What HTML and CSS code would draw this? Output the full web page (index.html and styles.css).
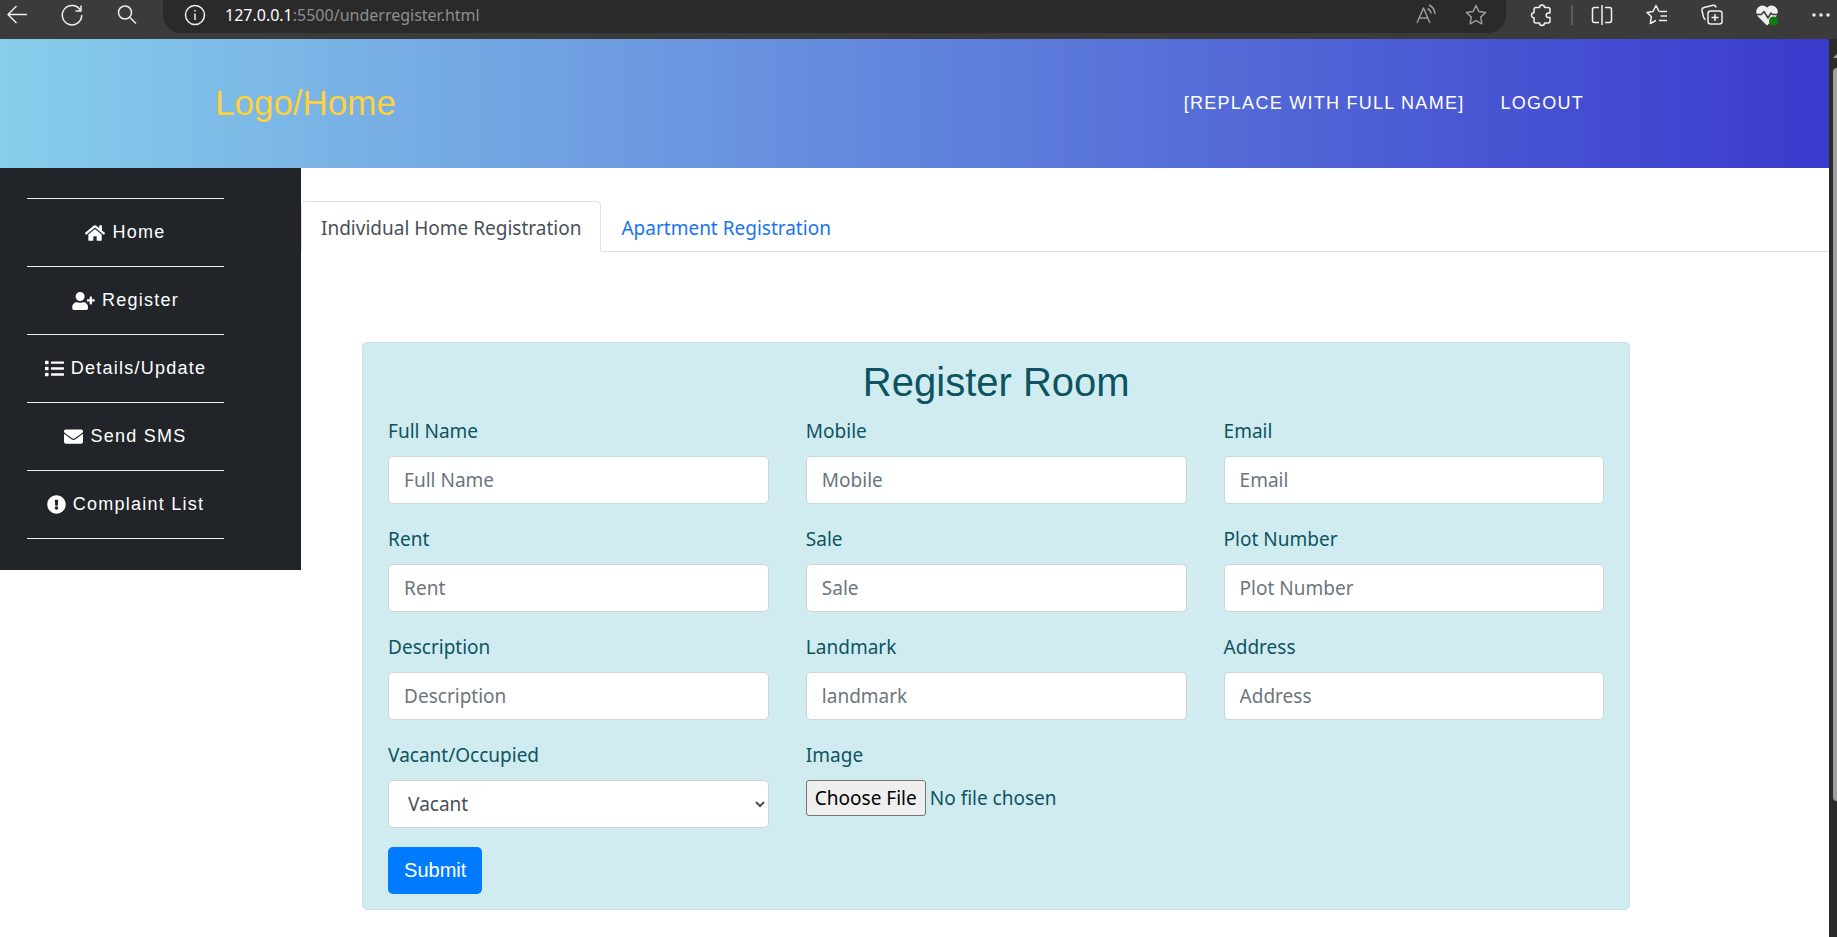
FILE: index.html
```html
<!DOCTYPE html>
<html lang="en">
<head>
<meta charset="utf-8">
<title>Register Room</title>
<link rel="stylesheet" href="styles.css">
</head>
<body>
<div class="toolbar">
  <div class="toolbar-nav">
    <button class="tool" aria-label="Back"><svg class="glyph" viewBox="0 0 24 24"><path d="M22 11.500H3M11.500 3L3 11.500l8.500 8.500"/></svg></button>
    <button class="tool" aria-label="Refresh"><svg class="glyph" viewBox="0 0 24 24"><path d="M20.500 7.500A9.700 9.700 0 1 0 21.700 12M21 2.500v5.500h-5.500"/></svg></button>
    <button class="tool" aria-label="Search"><svg class="glyph" viewBox="0 0 24 24"><circle cx="10" cy="9.500" r="6.500"/><path d="M15 14.500l6 6"/></svg></button>
  </div>
  <div class="address">
    <button class="tool" aria-label="Site information"><svg class="glyph" viewBox="0 0 24 24"><circle cx="12" cy="12" r="9.500"/><path d="M12 10.500v6.500M12 7v1.500"/></svg></button>
    <div class="url"><span class="url-host">127.0.0.1</span>:5500/underregister.html</div>
    <button class="tool muted" aria-label="Read aloud"><svg class="glyph" viewBox="0 0 24 24"><path d="M3 20L9.500 5 16 20M5.300 15h8.400M13.500 5.500q3 1.500 3.500 5M15 2q5.500 2.500 6 9"/></svg></button>
    <button class="tool muted" aria-label="Add favourite"><svg class="glyph" viewBox="0 0 24 24"><path d="M12 2.500l2.900 6.100 6.700.9-4.900 4.600 1.200 6.700-5.900-3.200-5.900 3.200 1.200-6.700L2.400 9.500l6.700-.9z"/></svg></button>
  </div>
  <div class="toolbar-end">
    <button class="tool" aria-label="Extensions"><svg class="glyph" viewBox="0 0 24 24"><path d="M6 4.500h3.500a2.500 2.500 0 0 1 5 0H18q2 0 2 2V10h-1.500a2.300 2.300 0 0 0 0 4.600H20v3.400q0 2-2 2h-3.500a2.500 2.500 0 0 1-5 0H6q-2 0-2-2v-3.300a2.500 2.500 0 0 1 0-5V6.500q0-2 2-2z"/></svg></button>
    <span class="divider"></span>
    <button class="tool" aria-label="Split screen"><svg class="glyph" viewBox="0 0 24 24"><path d="M12 2v20M9 4.500H4.500q-2 0-2 2v11q0 2 2 2H9M15 4.500h4.500q2 0 2 2v11q0 2-2 2H15"/></svg></button>
    <button class="tool" aria-label="Favourites"><svg class="glyph" viewBox="0 0 24 24"><path d="M14.500 8.500h7.500M15.500 13h6.500M14 17.500h8M14 8.500l-3-6-3 6-6 .9 4.400 4.300-1.100 6.800 5.700-3"/></svg></button>
    <button class="tool" aria-label="Collections"><svg class="glyph" viewBox="0 0 24 24"><rect x="8" y="8" width="14" height="13" rx="2.500"/><path d="M15 11v7M11.500 14.500h7M5.500 16.500Q4 16 3.500 14L2 7.500Q1.600 5 4 4.500l9-2.300q2.500-.4 3.200 2.300"/></svg></button>
    <button class="tool" aria-label="Browser essentials"><svg class="glyph" viewBox="0 0 24 24"><path class="solid" d="M12 21.500L3.500 13Q.500 8.500 3.500 5q4-3.500 8.500.5Q16.500 1.500 20.500 5q3 3.500 0 8z"/><path class="pulse" d="M1 11.500h5.500l2.500-3 4 6.500 3-5 1.500 1.500H23"/><circle class="status" cx="18.500" cy="18" r="4.500"/></svg></button>
    <button class="tool" aria-label="More"><svg class="glyph" viewBox="0 0 24 24"><circle class="solid" cx="4" cy="12" r="1"/><circle class="solid" cx="11" cy="12" r="1"/><circle class="solid" cx="18" cy="12" r="1"/></svg></button>
  </div>
</div>

<div class="viewport">
  <div class="page">
    <header class="header">
      <a class="logo" href="#">Logo/Home</a>
      <nav class="header-nav">
        <a href="#">[REPLACE WITH FULL NAME]</a>
        <a href="#">LOGOUT</a>
      </nav>
    </header>

    <div class="layout">
      <nav class="sidebar">
        <ul class="menu">
          <li><a href="#"><svg class="icon w20" viewBox="0 0 576 512"><path d="M280.370 148.260L96 300.110V464a16 16 0 0 0 16 16l112.060-.29a16 16 0 0 0 15.920-16V368a16 16 0 0 1 16-16h64a16 16 0 0 1 16 16v95.640a16 16 0 0 0 16 16.050L464 480a16 16 0 0 0 16-16V300L295.670 148.260a12.190 12.190 0 0 0-15.300 0zM571.600 251.470L488 182.560V44.050a12 12 0 0 0-12-12h-56a12 12 0 0 0-12 12v72.610L318.470 43a48 48 0 0 0-61 0L4.340 251.470a12 12 0 0 0-1.600 16.900l25.500 31A12 12 0 0 0 45.150 301l235.220-193.740a12.190 12.190 0 0 1 15.300 0L530.900 301a12 12 0 0 0 16.900-1.600l25.500-31a12 12 0 0 0-1.700-16.930z"/></svg>Home</a></li>
          <li><a href="#"><svg class="icon w23" viewBox="0 0 640 512"><path d="M624 208h-64v-64c0-8.800-7.200-16-16-16h-32c-8.800 0-16 7.200-16 16v64h-64c-8.800 0-16 7.200-16 16v32c0 8.800 7.200 16 16 16h64v64c0 8.800 7.200 16 16 16h32c8.800 0 16-7.200 16-16v-64h64c8.800 0 16-7.200 16-16v-32c0-8.800-7.200-16-16-16zm-400 48c70.700 0 128-57.300 128-128S294.700 0 224 0 96 57.300 96 128s57.300 128 128 128zm89.600 32h-16.700c-22.200 10.200-46.900 16-72.900 16s-50.600-5.800-72.900-16h-16.700C60.200 288 0 348.200 0 422.400V464c0 26.500 21.500 48 48 48h352c26.500 0 48-21.500 48-48v-41.600c0-74.200-60.200-134.400-134.400-134.400z"/></svg>Register</a></li>
          <li><a href="#"><svg class="icon w19" viewBox="0 0 512 512"><path d="M80 368H16a16 16 0 0 0-16 16v64a16 16 0 0 0 16 16h64a16 16 0 0 0 16-16v-64a16 16 0 0 0-16-16zm0-320H16A16 16 0 0 0 0 64v64a16 16 0 0 0 16 16h64a16 16 0 0 0 16-16V64a16 16 0 0 0-16-16zm0 160H16a16 16 0 0 0-16 16v64a16 16 0 0 0 16 16h64a16 16 0 0 0 16-16v-64a16 16 0 0 0-16-16zm416 176H176a16 16 0 0 0-16 16v32a16 16 0 0 0 16 16h320a16 16 0 0 0 16-16v-32a16 16 0 0 0-16-16zm0-320H176a16 16 0 0 0-16 16v32a16 16 0 0 0 16 16h320a16 16 0 0 0 16-16V80a16 16 0 0 0-16-16zm0 160H176a16 16 0 0 0-16 16v32a16 16 0 0 0 16 16h320a16 16 0 0 0 16-16v-32a16 16 0 0 0-16-16z"/></svg>Details/Update</a></li>
          <li><a href="#"><svg class="icon w19" viewBox="0 0 512 512"><path d="M502.300 190.800c3.900-3.100 9.700-.2 9.700 4.700V400c0 26.500-21.500 48-48 48H48c-26.500 0-48-21.500-48-48V195.600c0-5 5.700-7.800 9.700-4.700 22.400 17.400 52.100 39.500 154.100 113.600 21.100 15.400 56.700 47.800 92.200 47.600 35.700.3 72-32.800 92.300-47.600 102-74.100 131.600-96.300 154-113.700zM256 320c23.200.4 56.600-29.200 73.400-41.400 132.700-96.300 142.800-104.700 173.400-128.700 5.800-4.500 9.200-11.500 9.200-18.900v-19c0-26.500-21.500-48-48-48H48c-26.500 0-48 21.500-48 48v19c0 7.400 3.400 14.300 9.200 18.900 30.600 23.900 40.700 32.400 173.400 128.700 16.800 12.200 50.200 41.800 73.400 41.400z"/></svg>Send SMS</a></li>
          <li><a href="#"><svg class="icon w19" viewBox="0 0 512 512"><path d="M504 256c0 136.997-111.043 248-248 248S8 392.997 8 256C8 119.083 119.043 8 256 8s248 111.083 248 248zm-248 50c-25.405 0-46 20.595-46 46s20.595 46 46 46 46-20.595 46-46-20.595-46-46-46zm-43.673-165.346l7.418 136c.347 6.364 5.609 11.346 11.982 11.346h48.546c6.373 0 11.635-4.982 11.982-11.346l7.418-136c.375-6.874-5.098-12.654-11.982-12.654h-63.383c-6.884 0-12.356 5.780-11.981 12.654z"/></svg>Complaint List</a></li>
        </ul>
      </nav>

      <main class="main">
        <div class="tabs">
          <a class="tab active" href="#">Individual Home Registration</a>
          <a class="tab" href="#">Apartment Registration</a>
        </div>

        <form class="card">
          <h2 class="title">Register Room</h2>
          <div class="fields">
            <div class="field"><label for="name">Full Name</label><input class="control" id="name" type="text" placeholder="Full Name"></div>
            <div class="field"><label for="mobile">Mobile</label><input class="control" id="mobile" type="text" placeholder="Mobile"></div>
            <div class="field"><label for="email">Email</label><input class="control" id="email" type="email" placeholder="Email"></div>
            <div class="field"><label for="rent">Rent</label><input class="control" id="rent" type="text" placeholder="Rent"></div>
            <div class="field"><label for="sale">Sale</label><input class="control" id="sale" type="text" placeholder="Sale"></div>
            <div class="field"><label for="plot">Plot Number</label><input class="control" id="plot" type="text" placeholder="Plot Number"></div>
            <div class="field"><label for="description">Description</label><input class="control" id="description" type="text" placeholder="Description"></div>
            <div class="field"><label for="landmark">Landmark</label><input class="control" id="landmark" type="text" placeholder="landmark"></div>
            <div class="field"><label for="address">Address</label><input class="control" id="address" type="text" placeholder="Address"></div>
            <div class="field"><label for="status">Vacant/Occupied</label><select class="control select" id="status"><option>Vacant</option><option>Occupied</option></select></div>
            <div class="field"><label for="image">Image</label><input class="file" id="image" type="file"></div>
          </div>
          <button class="submit" type="submit">Submit</button>
        </form>
      </main>
    </div>
  </div>
  <div class="scrollbar">
    <span class="arrow"></span>
    <span class="thumb"></span>
  </div>
</div>
</body>
</html>
```
FILE: styles.css
```css
* { box-sizing: border-box; }

body {
  margin: 0;
  height: 100vh;
  display: flex;
  flex-direction: column;
  overflow: hidden;
  background: #fff;
  color: #212529;
  font: 19px/30px "Noto Sans", "Open Sans", sans-serif;
}

a { text-decoration: none; }

/* Browser toolbar */
.toolbar {
  display: flex;
  flex: none;
  height: 39px;
  background: #3b3b3b;
  color: #f0f0f0;
  overflow: hidden;
}

.toolbar-nav {
  display: flex;
  gap: 31px;
  padding: 3px 24px 0 5px;
}

.tool {
  flex: none;
  width: 24px;
  height: 24px;
  padding: 0;
  border: 0;
  background: none;
  color: inherit;
}

.muted { color: #9a9a9a; }

.glyph {
  display: block;
  width: 24px;
  height: 24px;
  fill: none;
  stroke: currentColor;
  stroke-width: 1.5;
  stroke-linejoin: round;
}

.glyph .solid { fill: currentColor; }
.glyph .pulse { stroke: #3b3b3b; }
.glyph .status { fill: #107c10; stroke: none; }

.address {
  display: flex;
  flex: 1;
  gap: 26px;
  height: 33px;
  padding: 3px 18px 0 20px;
  border-radius: 0 0 18px 18px;
  background: #2a2a2a;
}

.url {
  flex: 1;
  margin-left: -8px;
  color: #8e8e8e;
  font-size: 16px;
  line-height: 24px;
}

.url-host { color: #fff; }

.toolbar-end {
  display: flex;
  gap: 31px;
  padding: 3px 3px 0 24px;
}

.divider {
  width: 2px;
  height: 20px;
  margin: 2px -14px;
  background: #5c5c5c;
}

/* Page frame */
.viewport {
  display: flex;
  flex: 1;
  min-height: 0;
}

.page {
  flex: 1;
  min-width: 0;
}

.scrollbar {
  flex: none;
  width: 8px;
  padding: 14px 0 136px 4px;
  display: flex;
  flex-direction: column;
  gap: 10px;
  overflow: hidden;
  background: #2b2b2b;
}

.arrow {
  width: 10px;
  height: 5px;
  background: #9e9e9e;
  clip-path: polygon(50% 0, 100% 100%, 0 100%);
}

.thumb {
  flex: 1;
  width: 8px;
  border-radius: 4px;
  background: #9e9e9e;
}

/* Header */
.header {
  display: flex;
  align-items: center;
  justify-content: space-between;
  height: 129px;
  padding: 0 245px 2px 215px;
  background: linear-gradient(to right, #87ceeb, #3a3acd);
  font-family: "Liberation Sans", Arial, sans-serif;
}

.logo {
  color: #ffd13b;
  font-size: 35px;
}

.header-nav {
  display: flex;
  gap: 36px;
  font-size: 18px;
  letter-spacing: 0.07em;
}

.header-nav a { color: #fff; }

/* Sidebar */
.layout {
  display: flex;
  align-items: flex-start;
}

.sidebar {
  flex: none;
  width: 301px;
  padding: 30px 77px 31px 27px;
  background: #212529;
}

.menu {
  margin: 0;
  padding: 0;
  border-top: 1px solid #f0f0f0;
  list-style: none;
}

.menu a {
  display: flex;
  align-items: center;
  justify-content: center;
  gap: 7px;
  padding: 18px 0;
  border-bottom: 1px solid #f0f0f0;
  color: #fff;
  font: 18px/31px "Liberation Sans", Arial, sans-serif;
  letter-spacing: 0.07em;
}

.icon {
  height: 18px;
  fill: currentColor;
}

.w19 { width: 19px; height: 19px; }
.w20 { width: 20px; }
.w23 { width: 23px; }

/* Tabs */
.main {
  flex: 1;
  min-width: 0;
  padding-top: 33px;
}

.tabs {
  display: flex;
  border-bottom: 1px solid #dee2e6;
}

.tab {
  margin-bottom: -1px;
  padding: 11px 19px 8px;
  border: 1px solid transparent;
  border-radius: 5px 5px 0 0;
  color: #1a73f0;
}

.tab.active {
  border-color: #dee2e6 #dee2e6 #fff;
  background: #fff;
  color: #495057;
}

/* Registration form */
.card {
  margin: 90px 13% 0 4%;
  padding: 15px 25px;
  border: 1px solid #bee5eb;
  border-radius: 5px;
  background: #d1ecf1;
  color: #0c5460;
}

.title {
  margin: 0 0 10px;
  font: 40px/48px "Liberation Sans", Arial, sans-serif;
  text-align: center;
}

.fields {
  display: grid;
  grid-template-columns: repeat(3, 1fr);
  gap: 20px 37px;
  margin-bottom: 19px;
}

.field {
  display: flex;
  flex-direction: column;
  align-items: flex-start;
  gap: 10px;
}

.control {
  width: 100%;
  height: 48px;
  padding: 8px 15px;
  border: 1px solid #ced4da;
  border-radius: 5px;
  background: #fff;
  color: #495057;
  font: inherit;
}

.control::placeholder {
  color: #6c757d;
  opacity: 1;
}

.select { padding: 0 0 0 15px; }

.file {
  color: inherit;
  font: inherit;
}

.file::file-selector-button {
  height: 36px;
  padding: 1px 8px;
  border: 1px solid #767676;
  border-radius: 3px;
  background: #efefef;
  color: #000;
  font: inherit;
}

.submit {
  display: block;
  padding: 8px 16px;
  border: 0;
  border-radius: 5px;
  background: #007bff;
  color: #fff;
  font: 20px/31px "Liberation Sans", Arial, sans-serif;
}
```
